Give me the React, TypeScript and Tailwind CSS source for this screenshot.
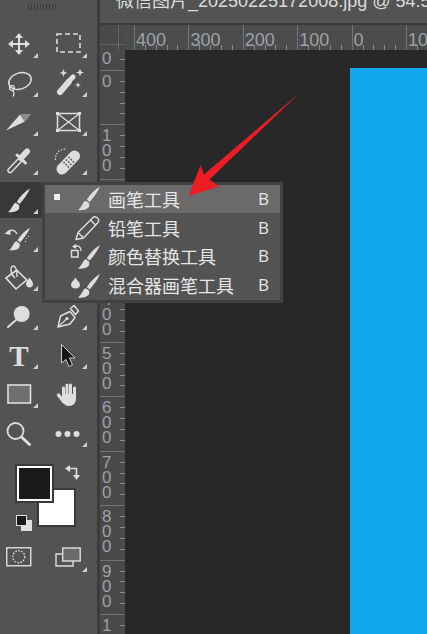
import React from "react";

const LIGHT = "#dedede";
const PANEL = "#535353";

function BrushShape({ x, y, s = 1 }: { x: number; y: number; s?: number }) {
  return (
    <g transform={`translate(${x} ${y}) scale(${s})`} fill={LIGHT}>
      <path d="M22 0 C17 3 12 8 8.8 13.2 L11.6 15.6 C15.5 11 19.5 6 22 0 Z" />
      <path d="M7.8 14.2 C4.5 15 4.6 20 0 23.6 C5 24.4 13 23 11 16.6 Z" />
    </g>
  );
}

function Tool({
  children,
  more = true,
  active = false,
}: {
  children?: React.ReactNode;
  more?: boolean;
  active?: boolean;
}) {
  return (
    <div className="relative h-[38.9px] w-[38px]">
      {active && <div className="absolute left-0 top-[5px] h-[36px] w-[42px] bg-[#383838]" />}
      {children && (
        <svg width="38" height="39" viewBox="0 0 38 39" className="relative block">
          {children}
        </svg>
      )}
      {children && more && (
        <div className="absolute right-0 top-[32px] h-0 w-0 border-b-[5px] border-l-[5px] border-b-[#cfcfcf] border-l-transparent" />
      )}
    </div>
  );
}

function Toolbar() {
  return (
    <div className="relative w-[97px] shrink-0 bg-[#535353]">
      <div className="flex h-[21px] items-start gap-[2px] pl-[28px] pt-[4px]">
        {[...Array(10)].map((_, i) => (
          <div key={i} className="h-[6px] w-px bg-[#3c3c3c]" />
        ))}
      </div>
      <div className="grid grid-cols-[38px_38px] gap-x-[11px]">
        {/* move / marquee */}
        <Tool>
          <g stroke={LIGHT} strokeWidth="2">
            <path d="M19 15V31M11 23H27" />
          </g>
          <g fill={LIGHT}>
            <path d="M19 12l-4 5h8zM19 34l-4-5h8zM8 23l5-4v8zM30 23l-5-4v8z" />
          </g>
        </Tool>
        <Tool>
          <rect x="8" y="13" width="23" height="18" fill="none" stroke={LIGHT} strokeWidth="1.6" strokeDasharray="5 3" />
        </Tool>
        {/* lasso / wand */}
        <Tool>
          <ellipse cx="20" cy="21" rx="11.5" ry="8" transform="rotate(-18 20 21)" fill="none" stroke={LIGHT} strokeWidth="1.5" />
          <circle cx="12" cy="28" r="2.4" fill="none" stroke={LIGHT} strokeWidth="1.3" />
          <path d="M12.5 30.5C15 33 14 35 13 36.5" fill="none" stroke={LIGHT} strokeWidth="1.3" />
        </Tool>
        <Tool>
          <path d="M11 32L20 21.5" stroke={LIGHT} strokeWidth="6" strokeLinecap="round" />
          <path d="M22 19L24 17" stroke={LIGHT} strokeWidth="5" strokeLinecap="round" />
          <path
            d="M14.5 9l1 3 3 1-3 1-1 3-1-3-3-1 3-1zM31 8.5l1 3 3 1-3 1-1 3-1-3-3-1 3-1zM29 22l.8 2.2 2.2.8-2.2.8-.8 2.2-.8-2.2-2.2-.8 2.2-.8z"
            fill={LIGHT}
          />
        </Tool>
        {/* slice / frame */}
        <Tool>
          <path d="M6 31.5L20 15.5L25 22.5Z" fill={LIGHT} />
          <path d="M20.5 15H31L24.5 23.5Z" fill="#8e8e8e" />
        </Tool>
        <Tool>
          <rect x="8.5" y="14.5" width="22" height="17" fill="none" stroke={LIGHT} strokeWidth="1.5" />
          <path d="M8.5 14.5L30.5 31.5M30.5 14.5L8.5 31.5" stroke={LIGHT} strokeWidth="1.3" />
          <path d="M7 13h3v3H7zM29 13h3v3h-3zM7 30h3v3H7zM29 30h3v3h-3z" fill={LIGHT} />
        </Tool>
        {/* eyedropper / healing */}
        <Tool>
          <path d="M10 32.5L20 22" stroke={LIGHT} strokeWidth="5.5" strokeLinecap="round" />
          <path d="M10 32.5L20 22" stroke={PANEL} strokeWidth="2.6" strokeLinecap="round" />
          <path d="M21 20L27 13.5" stroke={LIGHT} strokeWidth="6" strokeLinecap="round" />
          <path d="M17 17L25.5 25" stroke={LIGHT} strokeWidth="3" strokeLinecap="round" />
        </Tool>
        <Tool>
          <path d="M13 31L25.5 18" stroke={LIGHT} strokeWidth="11" strokeLinecap="round" />
          <path d="M14.5 24L20.5 30M17 21.5L23 27.5M19.5 19L25.5 25" stroke="#535353" strokeWidth="1.6" strokeDasharray="1.6 1.4" />
          <path d="M6.5 22C6 15 11 10.5 18 11" fill="none" stroke={LIGHT} strokeWidth="1.2" strokeDasharray="1.5 1.5" />
        </Tool>
        {/* brush */}
        <Tool active>
          <BrushShape x={8} y={11.5} />
        </Tool>
        <Tool />
        {/* colour replacement */}
        <Tool>
          <BrushShape x={9} y={12.5} s={0.96} />
          <path d="M7 18C11 13.5 15 15 17 19" fill="none" stroke={LIGHT} strokeWidth="1.5" />
          <path d="M4.5 18.5L10 14.5L10.5 20Z" fill={LIGHT} />
          <path d="M26 23h1v1h-1zM28 21h1v1h-1zM25 26h1v1h-1z" fill={LIGHT} />
        </Tool>
        <Tool />
        {/* paint bucket */}
        <Tool>
          <path d="M6 24L16.7 16L26.7 26L16 35Z" fill="none" stroke={LIGHT} strokeWidth="1.6" />
          <path d="M15 24C10 20 10 12 13 12C16 12 17 17 17 23" fill="none" stroke={LIGHT} strokeWidth="1.4" />
          <path d="M29.5 23.5C31 26 33 27.5 33 30C33 32 31.5 33.5 29.5 33.5C27.5 33.5 26 32 26 30C26 27.5 28 26 29.5 23.5Z" fill={LIGHT} />
        </Tool>
        <Tool />
        {/* dodge / pen */}
        <Tool>
          <circle cx="21.7" cy="21" r="8" fill={LIGHT} />
          <path d="M16 27L8 34" stroke={LIGHT} strokeWidth="2" strokeLinecap="round" />
        </Tool>
        <Tool>
          <path d="M9 34L11.5 23L21 18.5L26 24.5L21 31Z" fill="none" stroke={LIGHT} strokeWidth="1.5" strokeLinejoin="round" />
          <path d="M21.5 15.5L25 12.5L29.5 18L26.5 21.5Z" fill="none" stroke={LIGHT} strokeWidth="1.5" strokeLinejoin="round" />
          <path d="M9.5 33.5L17 26.5" stroke={LIGHT} strokeWidth="1.1" />
          <circle cx="18" cy="25.5" r="1.6" fill={LIGHT} />
        </Tool>
        {/* type / path selection */}
        <Tool>
          <text x="19" y="34" textAnchor="middle" fontSize="29" fontWeight="700" fontFamily="'Liberation Serif', serif" fill={LIGHT}>
            T
          </text>
        </Tool>
        <Tool>
          <path d="M12.5 12.5L26 26L20.5 26L23.5 33L20 34.5L17 27.5L12.5 31Z" fill="#151515" stroke={LIGHT} strokeWidth="0.9" />
        </Tool>
        {/* shape / hand */}
        <Tool>
          <rect x="8" y="14" width="22.5" height="18" fill="#6f6f6f" stroke={LIGHT} strokeWidth="1.6" />
        </Tool>
        <Tool more={false}>
          <g stroke={LIGHT} strokeWidth="3" strokeLinecap="round">
            <path d="M14.5 17V26M18 14V26M21.5 14V26M25.5 17V26" />
            <path d="M9.5 24L15 31" strokeWidth="3.4" />
          </g>
          <path d="M13.5 23H27V28C27 32 24 35 20 35C16.5 35 14.5 33 13.5 30Z" fill={LIGHT} />
        </Tool>
        {/* zoom / more */}
        <Tool more={false}>
          <circle cx="15.5" cy="21" r="8" fill="none" stroke={LIGHT} strokeWidth="1.8" />
          <path d="M21.5 27L29.5 34.5" stroke={LIGHT} strokeWidth="3" strokeLinecap="round" />
        </Tool>
        <Tool>
          <circle cx="9.5" cy="24" r="3" fill={LIGHT} />
          <circle cx="18.5" cy="24" r="3" fill={LIGHT} />
          <circle cx="27.5" cy="24" r="3" fill={LIGHT} />
        </Tool>
      </div>

      {/* foreground / background colours */}
      <div className="relative h-[90px]">
        <div className="absolute left-[37px] top-[39px] h-[39px] w-[39px] border-2 border-[#3a3a3a] bg-white" />
        <div className="absolute left-[15px] top-[15px] h-[39px] w-[39px] border-2 border-[#3a3a3a] bg-[#1a1a1a] outline-2 -outline-offset-4 outline-white" />
        <svg width="16" height="16" viewBox="0 0 16 16" className="absolute left-[65px] top-[16px]">
          <path d="M0 3.5L5 0V7Z" fill={LIGHT} />
          <path d="M4 3.5H11.5V10" fill="none" stroke={LIGHT} strokeWidth="1.6" />
          <path d="M8 10H15L11.5 15Z" fill={LIGHT} />
        </svg>
        <div className="absolute left-[21px] top-[71px] h-[11px] w-[11px] bg-[#e0e0e0]" />
        <div className="absolute left-[16px] top-[66px] h-[11px] w-[11px] border border-[#e0e0e0] bg-[#1a1a1a]" />
      </div>

      <div className="flex items-start pl-[6px] pt-[8px]">
        <svg width="26" height="20" viewBox="0 0 26 20">
          <rect x="0.75" y="0.75" width="24" height="18" fill="none" stroke={LIGHT} strokeWidth="1.4" />
          <circle cx="12.75" cy="9.75" r="6" fill="none" stroke={LIGHT} strokeWidth="1.3" strokeDasharray="1.6 1.4" />
        </svg>
        <svg width="26" height="20" viewBox="0 0 26 20" className="ml-[23px]">
          <path d="M7 7H1V19H18V14" fill="none" stroke={LIGHT} strokeWidth="1.4" />
          <rect x="7.7" y="1" width="17.5" height="13" fill="#6a6a6a" stroke={LIGHT} strokeWidth="1.4" />
        </svg>
        <div className="ml-[1px] mt-[20px] h-0 w-0 border-b-[5px] border-l-[5px] border-b-[#cfcfcf] border-l-transparent" />
      </div>
    </div>
  );
}

function HorizontalRuler() {
  return (
    <div className="flex h-[25px] shrink-0 bg-[#4c4c4c]">
      <div className="relative h-full w-[25px] shrink-0 bg-[#4a4a4a]">
        <div className="absolute left-[18px] top-0 h-full border-l border-dotted border-[#7a7a7a]" />
        <div className="absolute left-0 top-[19px] w-full border-t border-dotted border-[#7a7a7a]" />
      </div>
      <div className="flex h-full min-w-0 flex-1 overflow-hidden pl-[9px]">
        {["400", "300", "200", "100", "0", "10"].map((label) => (
          <div key={label} className="relative h-full w-[54.4px] shrink-0 border-l border-[#747474]">
            <span className="absolute left-[1px] top-[5px] font-['Liberation_Sans',sans-serif] text-[18px] leading-[20px] text-[#9ba1a8]">
              {label}
            </span>
            <div className="absolute bottom-0 left-[10px] flex gap-[9.8px]">
              {[0, 1, 2, 3].map((i) => (
                <div key={i} className="h-[5px] w-px bg-[#8a8a8a]" />
              ))}
            </div>
          </div>
        ))}
      </div>
    </div>
  );
}

function Ticks() {
  return (
    <div className="flex w-[5px] flex-col gap-[9.8px] pt-[10px]">
      {[0, 1, 2, 3].map((i) => (
        <div key={i} className="h-px w-[5px] bg-[#8a8a8a]" />
      ))}
    </div>
  );
}

function VerticalRuler() {
  const labels = [["0"], ["1", "0", "0"], ["2", "0", "0"], ["3", "0", "0"], ["4", "0", "0"], ["5", "0", "0"], ["6", "0", "0"], ["7", "0", "0"], ["8", "0", "0"], ["9", "0", "0"], ["1", "0", "0", "0"]];
  return (
    <div className="w-[25px] shrink-0 overflow-hidden bg-[#4a4a4a]">
      <div className="flex h-[20px] justify-between pl-[2px]">
        <span className="font-['Liberation_Sans',sans-serif] text-[17px] leading-[17px] text-[#9ba1a8]">0</span>
        <div className="mt-[9px] h-px w-[5px] bg-[#8a8a8a]" />
      </div>
      {labels.map((digits, i) => (
        <div key={i} className="flex h-[54.4px] justify-between overflow-hidden border-t border-[#747474] pl-[2px]">
          <div className="flex flex-col pt-[3px] font-['Liberation_Sans',sans-serif] text-[17px] leading-[15px] text-[#9ba1a8]">
            {digits.map((d, j) => (
              <span key={j}>{d}</span>
            ))}
          </div>
          <Ticks />
        </div>
      ))}
    </div>
  );
}

function FlyoutMenu() {
  const rows = [
    {
      name: "画笔工具",
      selected: true,
      icon: <BrushShape x={11} y={2.5} />,
    },
    {
      name: "铅笔工具",
      icon: (
        <g fill="none" stroke={LIGHT} strokeWidth="1.4" strokeLinejoin="round">
          <path d="M9 26.5L11 19.5L26 4.5C27.5 3.2 29 3.5 30.5 5C32 6.5 32.3 8 31 9.5L16.5 25Z" />
          <path d="M23.5 7L29 12.5M11 19.5L16.5 25" />
        </g>
      ),
    },
    {
      name: "颜色替换工具",
      icon: (
        <g>
          <BrushShape x={11} y={3} />
          <rect x="4.5" y="8.5" width="6.5" height="6.5" fill="none" stroke={LIGHT} strokeWidth="1.5" />
          <path d="M8 5C11 2.5 14 5 14 9" fill="none" stroke={LIGHT} strokeWidth="1.3" />
          <path d="M5 4.5L9 2V7Z" fill={LIGHT} />
        </g>
      ),
    },
    {
      name: "混合器画笔工具",
      icon: (
        <g>
          <BrushShape x={11} y={3} />
          <path d="M8.5 6.5C10 9.5 13 11 13 14C13 16 11 17.5 8.5 17.5C6 17.5 4 16 4 14C4 11 7 9.5 8.5 6.5Z" fill={LIGHT} />
        </g>
      ),
    },
  ];
  return (
    <div className="absolute left-[42px] top-[181.5px] w-[241px] border-[3px] border-[#414141] bg-[#535353]">
      {rows.map((row) => (
        <div key={row.name} className={`flex h-[28.75px] items-center pl-[9px] ${row.selected ? "bg-[#6a6a6a]" : ""}`}>
          <div className={`-mt-[4px] h-[6px] w-[6px] shrink-0 ${row.selected ? "bg-[#eeeeee]" : ""}`} />
          <svg width="34" height="29" viewBox="0 0 34 29" className="ml-[7px] shrink-0">
            {row.icon}
          </svg>
          <span className="ml-[7px] w-[150px] shrink-0 font-['Noto_Sans_CJK_SC',sans-serif] text-[18px] leading-[28px] text-[#e6e6e6]">
            {row.name}
          </span>
          <span className="font-['Open_Sans',sans-serif] text-[17px] leading-[28px] text-[#e6e6e6]">B</span>
        </div>
      ))}
    </div>
  );
}

export default function App() {
  return (
    <div className="relative flex h-[634px] w-[427px] overflow-hidden bg-[#535353]">
      <Toolbar />
      <div className="flex min-w-0 flex-1 flex-col border-l-[3px] border-[#3b3b3b]">
        <div className="h-[25px] shrink-0 overflow-hidden whitespace-nowrap border-b-[2px] border-[#3b3b3b] bg-[#535353] pl-[16px]">
          <div className="-mt-[11px] font-['Liberation_Sans','Noto_Sans_CJK_SC',sans-serif] text-[18px] leading-[24px] text-[#dcdcdc]">
            微信图片_20250225172008.jpg @ 54.5%
          </div>
        </div>
        <HorizontalRuler />
        <div className="flex min-h-0 flex-1">
          <VerticalRuler />
          <div className="flex-1 bg-[#282828] pl-[225px] pt-[18px]">
            <div className="h-full bg-[#12a8f0]" />
          </div>
        </div>
      </div>
      <FlyoutMenu />
      <svg width="427" height="634" viewBox="0 0 427 634" className="pointer-events-none absolute left-0 top-0">
        <path d="M299.5 93L204 174.5L200.5 165L188.5 196L219 186.5L209.5 179.5Z" fill="#ee1c25" />
      </svg>
    </div>
  );
}
